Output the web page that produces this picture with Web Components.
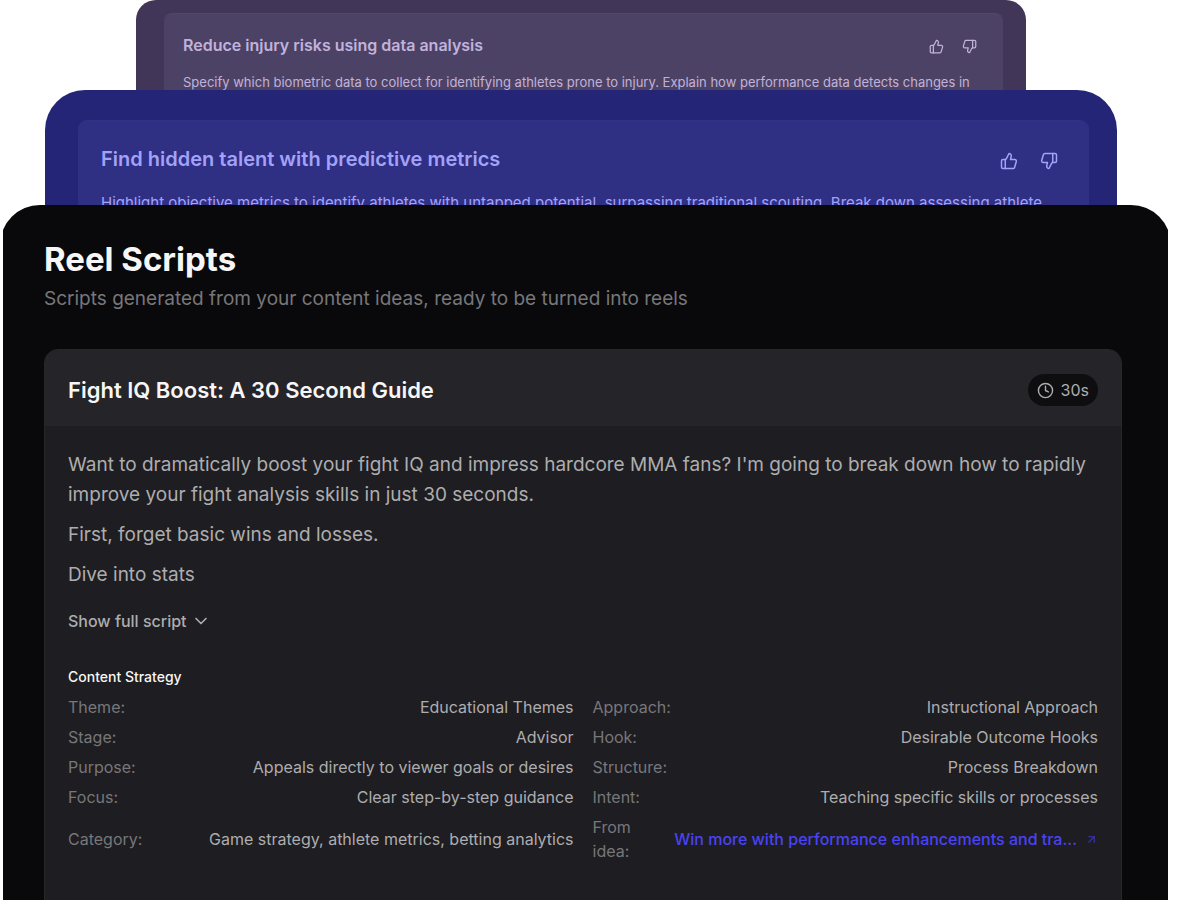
<!DOCTYPE html>
<html lang="en">
<head>
<meta charset="utf-8">
<title>Reel Scripts</title>
<style>
html { background: #fff; }
body { margin: 0; font-family: Inter, "Liberation Sans", sans-serif; }
</style>
</head>
<body>
<reel-page></reel-page>

<template id="t-page">
<style>
:host { display: block; padding: 0 32px 0 3px; height: 100vh; overflow: hidden; box-sizing: border-box; }
.back { margin: 0 142px 0 133px; --panel: #423658; --card: #4c4265; --edge: #50466a; --ink: #c1b2dc; --height: 90px; --radius: 20px; --pad: 13px 23px 0 28px; --card-pad: 21px 19px 0; --card-radius: 8px; --title: 16px; --text: 13px; --line: 20px; --gap: 17px; --icon: 15px; --icon-gap: 18px; --icon-inset: 7px; }
.middle { margin: 0 51px 0 42px; --panel: #252577; --card: #2f2f84; --edge: #313188; --ink: #a3a2f8; --height: 115px; --radius: 40px; --pad: 30px 28px 0 33px; --card-pad: 26px 23px 0; --card-radius: 9px; --title: 20px; --text: 15px; --line: 24px; --gap: 20px; --icon: 18px; --icon-gap: 22px; --icon-inset: 8px; }
</style>
<idea-panel class="back">
  <span slot="title">Reduce injury risks using data analysis</span>
  <span slot="text">Specify which biometric data to collect for identifying athletes prone to injury. Explain how performance data detects changes in</span>
</idea-panel>
<idea-panel class="middle">
  <span slot="title">Find hidden talent with predictive metrics</span>
  <span slot="text">Highlight objective metrics to identify athletes with untapped potential, surpassing traditional scouting. Break down assessing athlete</span>
</idea-panel>
<scripts-panel>
  <span slot="title">Reel Scripts</span>
  <span slot="subtitle">Scripts generated from your content ideas, ready to be turned into reels</span>
  <script-card>
    <span slot="title">Fight IQ Boost: A 30 Second Guide</span>
    <duration-badge slot="badge">30s</duration-badge>
    <p>Want to dramatically boost your fight IQ and impress hardcore MMA fans? I'm going to break down how to rapidly improve your fight analysis skills in just 30 seconds.</p>
    <p>First, forget basic wins and losses.</p>
    <p>Dive into stats</p>
    <content-strategy slot="strategy">
      <strategy-row label="Theme:">Educational Themes</strategy-row>
      <strategy-row label="Approach:">Instructional Approach</strategy-row>
      <strategy-row label="Stage:">Advisor</strategy-row>
      <strategy-row label="Hook:">Desirable Outcome Hooks</strategy-row>
      <strategy-row label="Purpose:">Appeals directly to viewer goals or desires</strategy-row>
      <strategy-row label="Structure:">Process Breakdown</strategy-row>
      <strategy-row label="Focus:">Clear step-by-step guidance</strategy-row>
      <strategy-row label="Intent:">Teaching specific skills or processes</strategy-row>
      <strategy-row label="Category:">Game strategy, athlete metrics, betting analytics</strategy-row>
      <strategy-row label="From idea:" narrow><idea-link>Win more with performance enhancements and tra...</idea-link></strategy-row>
    </content-strategy>
  </script-card>
</scripts-panel>
</template>

<template id="t-idea">
<style>
:host { display: block; height: var(--height); overflow: hidden; box-sizing: border-box; padding: var(--pad); background: var(--panel); border-radius: var(--radius) var(--radius) 0 0; color: var(--ink); }
article { box-sizing: border-box; min-height: 100%; padding: var(--card-pad); background: var(--card); border-top: 1px solid var(--edge); border-radius: var(--card-radius) var(--card-radius) 0 0; }
header { display: flex; align-items: center; justify-content: space-between; }
h2 { margin: 0; font-size: var(--title); line-height: var(--line); font-weight: 600; }
.votes { display: flex; gap: var(--icon-gap); padding: 3px var(--icon-inset) 0 0; }
button { display: block; border: 0; padding: 0; background: none; color: inherit; }
svg { display: block; width: var(--icon); height: var(--icon); fill: none; stroke: currentColor; stroke-width: 2; stroke-linecap: round; stroke-linejoin: round; }
p { margin: var(--gap) 0 0; font-size: var(--text); line-height: var(--line); white-space: nowrap; }
</style>
<article>
  <header>
    <h2><slot name="title"></slot></h2>
    <div class="votes">
      <button type="button" aria-label="Like"><svg viewBox="0 0 24 24"><path d="M7 10v12"/><path d="M15 5.88 14 10h5.83a2 2 0 0 1 1.92 2.56l-2.33 8A2 2 0 0 1 17.5 22H4a2 2 0 0 1-2-2v-8a2 2 0 0 1 2-2h2.76a2 2 0 0 0 1.79-1.11L12 2a3.13 3.13 0 0 1 3 3.88Z"/></svg></button>
      <button type="button" aria-label="Dislike"><svg viewBox="0 0 24 24"><path d="M17 14V2"/><path d="M9 18.12 10 14H4.17a2 2 0 0 1-1.92-2.56l2.33-8A2 2 0 0 1 6.5 2H20a2 2 0 0 1 2 2v8a2 2 0 0 1-2 2h-2.76a2 2 0 0 0-1.79 1.11L12 22a3.13 3.13 0 0 1-3-3.88Z"/></svg></button>
    </div>
  </header>
  <p><slot name="text"></slot></p>
</article>
</template>

<template id="t-panel">
<style>
:host { display: block; overflow: hidden; }
section { margin: 0 -3px; padding: 34px 49px 40px 44px; background: #09090b; border-radius: 40px 40px 0 0; }
h1 { margin: 0; font-size: 33px; line-height: 40px; font-weight: 700; color: #f6f6f6; }
.sub { margin: 5px 0 35px; font-size: 19px; line-height: 30px; color: #77777a; }
</style>
<section>
  <h1><slot name="title"></slot></h1>
  <p class="sub"><slot name="subtitle"></slot></p>
  <slot></slot>
</section>
</template>

<template id="t-card">
<style>
:host { display: block; border: 1px solid #27272a; border-radius: 14px; background: #1e1d21; overflow: hidden; }
header { display: flex; align-items: center; justify-content: space-between; padding: 24px 23px 20px; background: #252428; }
h2 { margin: 0; font-size: 22px; line-height: 32px; font-weight: 600; color: #f6f6f6; }
.body { padding: 24px 23px 60px; }
.script { display: grid; gap: 10px; }
::slotted(p) { margin: 0; font-size: 19px; line-height: 30px; color: #adadaf; }
button { display: flex; align-items: center; gap: 4px; margin: 19px 0 34px; padding: 0; border: 0; background: none; font: 500 16px/24px Inter, "Liberation Sans", sans-serif; color: #adadaf; }
svg { width: 20px; height: 20px; fill: none; stroke: currentColor; stroke-width: 2; stroke-linecap: round; stroke-linejoin: round; }
</style>
<header><h2><slot name="title"></slot></h2><slot name="badge"></slot></header>
<div class="body">
  <div class="script"><slot></slot></div>
  <button type="button">Show full script<svg viewBox="0 0 24 24"><path d="m6 9 6 6 6-6"/></svg></button>
  <slot name="strategy"></slot>
</div>
</template>

<template id="t-badge">
<style>
:host { display: flex; align-items: center; gap: 7px; height: 32px; padding: 0 9px; border-radius: 16px; background: #0e0e10; color: #adadaf; font-size: 16px; line-height: 24px; }
svg { width: 17px; height: 17px; fill: none; stroke: currentColor; stroke-width: 2; stroke-linecap: round; stroke-linejoin: round; }
</style>
<svg viewBox="0 0 24 24"><circle cx="12" cy="12" r="10"/><path d="M12 6v6l4 2"/></svg>
<span><slot></slot></span>
</template>

<template id="t-strategy">
<style>
:host { display: block; }
h3 { margin: 0 0 8px; font-size: 14px; line-height: 20px; font-weight: 500; color: #f6f6f6; }
.grid { display: grid; grid-template-columns: 1fr 1fr; column-gap: 19px; row-gap: 6px; }
</style>
<h3>Content Strategy</h3>
<div class="grid"><slot></slot></div>
</template>

<template id="t-row">
<style>
:host { display: flex; align-items: center; justify-content: space-between; gap: 8px; min-width: 0; font-size: 16px; line-height: 24px; color: #adadaf; }
.label { color: #77777a; }
:host([narrow]) .label { width: 56px; }
.value { text-align: right; white-space: nowrap; }
</style>
<span class="label"></span>
<span class="value"><slot></slot></span>
</template>

<template id="t-link">
<style>
:host { display: block; }
a { display: flex; align-items: center; gap: 8px; color: #4a43f6; font-weight: 500; text-decoration: none; }
svg { width: 13px; height: 13px; opacity: .7; fill: none; stroke: currentColor; stroke-width: 2; stroke-linecap: round; stroke-linejoin: round; }
</style>
<a href="#idea"><slot></slot><svg viewBox="0 0 24 24"><path d="M7 7h10v10"/><path d="M7 17 17 7"/></svg></a>
</template>

<script>
function define(name, templateId, setup) {
  customElements.define(name, class extends HTMLElement {
    constructor() {
      super();
      this.attachShadow({ mode: "open" }).append(document.getElementById(templateId).content.cloneNode(true));
    }
    connectedCallback() {
      if (setup) setup(this);
    }
  });
}
define("duration-badge", "t-badge");
define("idea-link", "t-link");
define("strategy-row", "t-row", el => {
  el.shadowRoot.querySelector(".label").textContent = el.getAttribute("label");
});
define("content-strategy", "t-strategy");
define("script-card", "t-card");
define("scripts-panel", "t-panel");
define("idea-panel", "t-idea");
define("reel-page", "t-page");
</script>
</body>
</html>
